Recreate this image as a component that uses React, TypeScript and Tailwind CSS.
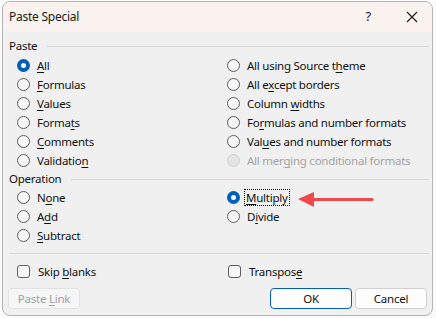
import type { ReactNode } from 'react';

const font = { fontFamily: '"Noto Sans", "Open Sans", sans-serif' };

function Key({ children }: { children: ReactNode }) {
  return <span className="underline underline-offset-[2px] decoration-[1px]">{children}</span>;
}

function Radio({ checked, disabled }: { checked?: boolean; disabled?: boolean }) {
  if (checked) {
    return (
      <span className="w-[13px] h-[13px] rounded-full bg-[#005fb8] flex items-center justify-center shrink-0">
        <span className="w-[5px] h-[5px] rounded-full bg-white" />
      </span>
    );
  }
  if (disabled) {
    return <span className="w-[13px] h-[13px] rounded-full bg-[#e4e4e4] border border-[#d0d0d0] shrink-0" />;
  }
  return <span className="w-[13px] h-[13px] rounded-full bg-[#f7f7f7] border border-[#5d5d5d] shrink-0" />;
}

function Option({
  children,
  checked,
  disabled,
  focused,
}: {
  children: ReactNode;
  checked?: boolean;
  disabled?: boolean;
  focused?: boolean;
}) {
  return (
    <div className="h-[19px] flex items-center gap-[7px]">
      <Radio checked={checked} disabled={disabled} />
      <span
        className={
          (disabled ? 'text-[#a3a3a3] ' : 'text-[#101010] ') +
          (focused ? 'outline outline-1 outline-dotted outline-black -ml-[2px] px-[1px] leading-[15px]' : '')
        }
      >
        {children}
      </span>
    </div>
  );
}

function Header({ label }: { label: string }) {
  return (
    <div className="h-[18px] flex items-center gap-[10px]">
      <span className="text-[#101010]">{label}</span>
      <div className="flex-1 h-px bg-[#d8d8d8]" />
    </div>
  );
}

function Check({ children }: { children: ReactNode }) {
  return (
    <div className="h-[19px] flex items-center gap-[8px]">
      <span className="w-[13px] h-[13px] rounded-[3px] bg-[#f7f7f7] border border-[#5d5d5d] shrink-0" />
      <span className="text-[#101010]">{children}</span>
    </div>
  );
}

export default function App() {
  return (
    <div className="w-[436px] h-[318px] bg-[#fbfbfb] pt-[1px] pl-[2px] text-[11.5px] tracking-[-0.25px]" style={font}>
      <div className="w-[431px] h-[315px] border border-[#b4b4b4] rounded-[8px] overflow-hidden bg-[#f0f0f0] flex flex-col relative">
        {/* title bar */}
        <div className="h-[29px] bg-[#f9f2ee] flex items-center pl-[6px] shrink-0">
          <span className="flex-1 text-[#1a1a1a] text-[12px]">Paste Special</span>
          <span className="text-[#1a1a1a] text-[13px] mr-[35px]">?</span>
          <svg width="12" height="12" viewBox="0 0 12 12" className="mr-[14px]">
            <path d="M1 1 L11 11 M11 1 L1 11" stroke="#1a1a1a" strokeWidth="1.1" />
          </svg>
        </div>

        <div className="flex flex-col pl-[6px] pr-[3px] pt-[6px]">
          <Header label="Paste" />
          <div className="grid grid-cols-[210px_1fr] pl-[8px] mt-[1px]">
            <div className="flex flex-col">
              <Option checked><Key>A</Key>ll</Option>
              <Option><Key>F</Key>ormulas</Option>
              <Option><Key>V</Key>alues</Option>
              <Option>Forma<Key>t</Key>s</Option>
              <Option><Key>C</Key>omments</Option>
              <Option>Validatio<Key>n</Key></Option>
            </div>
            <div className="flex flex-col">
              <Option>All using Source t<Key>h</Key>eme</Option>
              <Option>All e<Key>x</Key>cept borders</Option>
              <Option>Column <Key>w</Key>idths</Option>
              <Option>Fo<Key>r</Key>mulas and number formats</Option>
              <Option>Val<Key>u</Key>es and number formats</Option>
              <Option disabled>All mer<Key>g</Key>ing conditional formats</Option>
            </div>
          </div>

          <Header label="Operation" />
          <div className="grid grid-cols-[210px_1fr] pl-[8px]">
            <div className="flex flex-col">
              <Option>N<Key>o</Key>ne</Option>
              <Option>A<Key>d</Key>d</Option>
              <Option><Key>S</Key>ubtract</Option>
            </div>
            <div className="flex flex-col">
              <Option checked focused><Key>M</Key>ultiply</Option>
              <Option>D<Key>i</Key>vide</Option>
            </div>
          </div>

          <div className="h-px bg-[#d8d8d8] mt-[8px]" />

          <div className="grid grid-cols-[211px_1fr] pl-[8px] mt-[8px]">
            <Check>Skip <Key>b</Key>lanks</Check>
            <Check>Transpos<Key>e</Key></Check>
          </div>

          <div className="flex items-center mt-[7px] pr-[2px]">
            <button className="w-[72px] h-[21px] rounded-[4px] border border-[#e2e2e2] bg-[#f6f6f6] text-[#a0a0a0] -ml-[1px]">
              Paste <Key>L</Key>ink
            </button>
            <div className="flex-1" />
            <button className="w-[82px] h-[21px] rounded-[4px] border border-[#005fb8] bg-[#fdfdfd] text-[#101010]">
              OK
            </button>
            <button className="w-[72px] h-[21px] rounded-[4px] border border-[#d0d0d0] bg-[#fdfdfd] text-[#101010] ml-[3px]">
              Cancel
            </button>
          </div>
        </div>

        {/* annotation arrow */}
        <svg className="absolute left-[291px] top-[186px]" width="90" height="24" viewBox="0 0 90 24">
          <path d="M4 11 L20 4 L20 19 Z" fill="#f0484c" />
          <path d="M18 11.5 L78 11.5" stroke="#f0484c" strokeWidth="3.2" strokeLinecap="round" />
        </svg>
      </div>
    </div>
  );
}
